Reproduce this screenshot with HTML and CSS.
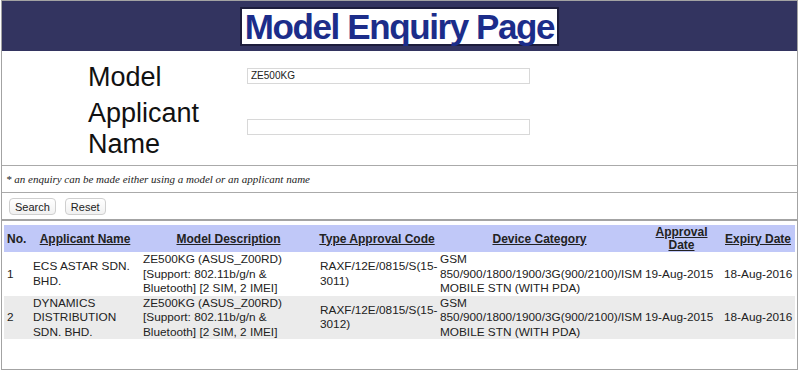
FILE: index.html
```html
<!DOCTYPE html>
<html>
<head>
    <meta charset="UTF-8">
    <title>Model Enquiry Page</title>
    <link rel="stylesheet" href="styles.css">
</head>
<body>
    <div id="page">
        <div class="banner">
            <h1 class="title">Model Enquiry Page</h1>
        </div>
        <div class="form">
            <label class="label" for="model">Model</label>
            <input class="field" id="model" type="text" value="ZE500KG">
            <label class="label" for="applicant">Applicant Name</label>
            <input class="field" id="applicant" type="text" value="">
        </div>
        <div class="note">* an enquiry can be made either using a model or an applicant name</div>
        <div class="actions">
            <button class="btn">Search</button>
            <button class="btn">Reset</button>
        </div>
        <table class="results">
            <colgroup>
                <col style="width: 26px">
                <col style="width: 110px">
                <col style="width: 177px">
                <col style="width: 120px">
                <col style="width: 205px">
                <col style="width: 79px">
                <col style="width: 74px">
            </colgroup>
            <thead>
                <tr>
                    <th class="no">No.</th>
                    <th><a href="#">Applicant Name</a></th>
                    <th><a href="#">Model Description</a></th>
                    <th><a href="#">Type Approval Code</a></th>
                    <th><a href="#">Device Category</a></th>
                    <th><a href="#">Approval Date</a></th>
                    <th><a href="#">Expiry Date</a></th>
                </tr>
            </thead>
            <tbody>
                <tr>
                    <td>1</td>
                    <td>ECS ASTAR SDN. BHD.</td>
                    <td>ZE500KG (ASUS_Z00RD) [Support: 802.11b/g/n &amp; Bluetooth] [2 SIM, 2 IMEI]</td>
                    <td>RAXF/12E/0815/S(15-3011)</td>
                    <td>GSM 850/900/1800/1900/3G(900/2100)/ISM MOBILE STN (WITH PDA)</td>
                    <td>19-Aug-2015</td>
                    <td>18-Aug-2016</td>
                </tr>
                <tr class="alt">
                    <td>2</td>
                    <td>DYNAMICS DISTRIBUTION SDN. BHD.</td>
                    <td>ZE500KG (ASUS_Z00RD) [Support: 802.11b/g/n &amp; Bluetooth] [2 SIM, 2 IMEI]</td>
                    <td>RAXF/12E/0815/S(15-3012)</td>
                    <td>GSM 850/900/1800/1900/3G(900/2100)/ISM MOBILE STN (WITH PDA)</td>
                    <td>19-Aug-2015</td>
                    <td>18-Aug-2016</td>
                </tr>
            </tbody>
        </table>
    </div>
</body>
</html>
```

FILE: styles.css
```css
body {
    margin: 0;
    font-family: 'Liberation Sans', Arial, sans-serif;
    background: #fff;
    color: #111;
}
#page {
    box-sizing: border-box;
    height: 370px;
    margin: 0 2px 0 1px;
    border: 1px solid #a3a3a3;
}
.banner {
    height: 50px;
    background: #333460;
    display: flex;
    justify-content: center;
    align-items: center;
}
.title {
    margin: 0;
    padding: 0 3px;
    background: #fff;
    border: 2px solid #1d1d3c;
    color: #1c2d8a;
    font-size: 35px;
    font-weight: bold;
    letter-spacing: -1.4px;
    line-height: 35px;
}
.form {
    display: grid;
    grid-template-columns: 159px 283px;
    row-gap: 5px;
    align-items: center;
    padding: 11px 0 5px 86px;
    border-bottom: 1px solid #aaa;
}
.label {
    font-size: 27px;
    line-height: 31px;
    color: #111;
}
.field {
    box-sizing: border-box;
    width: 283px;
    height: 16px;
    margin: 0 0 4px;
    padding: 0 3px;
    border: 1px solid #d8d8d8;
    font-family: 'Liberation Sans', Arial, sans-serif;
    font-size: 10px;
    color: #222;
}
.note {
    height: 26px;
    line-height: 26px;
    padding-left: 4px;
    font-family: 'Liberation Serif', 'Times New Roman', serif;
    font-style: italic;
    font-size: 11px;
    color: #222;
    border-bottom: 1px solid #aaa;
}
.actions {
    display: flex;
    gap: 9px;
    padding: 5px 7px 4px;
    border-bottom: 2px solid #a3a3a3;
}
.btn {
    height: 17px;
    padding: 0 5px;
    background: linear-gradient(#fff, #f1f1f1);
    border: 1px solid #cfcfcf;
    border-radius: 4px;
    font-family: 'Liberation Sans', Arial, sans-serif;
    font-size: 11px;
    color: #222;
}
.results {
    table-layout: fixed;
    width: 791px;
    margin: 4px 0 0 2px;
    border-collapse: collapse;
    font-size: 11.8px;
    color: #222;
}
.results th {
    background: #c0c8f8;
    padding: 1px 1px 0;
    line-height: 13px;
    font-size: 12px;
    font-weight: bold;
    text-align: center;
    vertical-align: middle;
}
.results th.no {
    text-align: left;
    padding-left: 3px;
}
.results th a {
    color: #222;
    text-decoration: underline;
}
.results td {
    padding: 0 1px 0 3px;
    line-height: 14.5px;
    vertical-align: middle;
}
.results tr.alt td {
    background: #ebebeb;
}
```
